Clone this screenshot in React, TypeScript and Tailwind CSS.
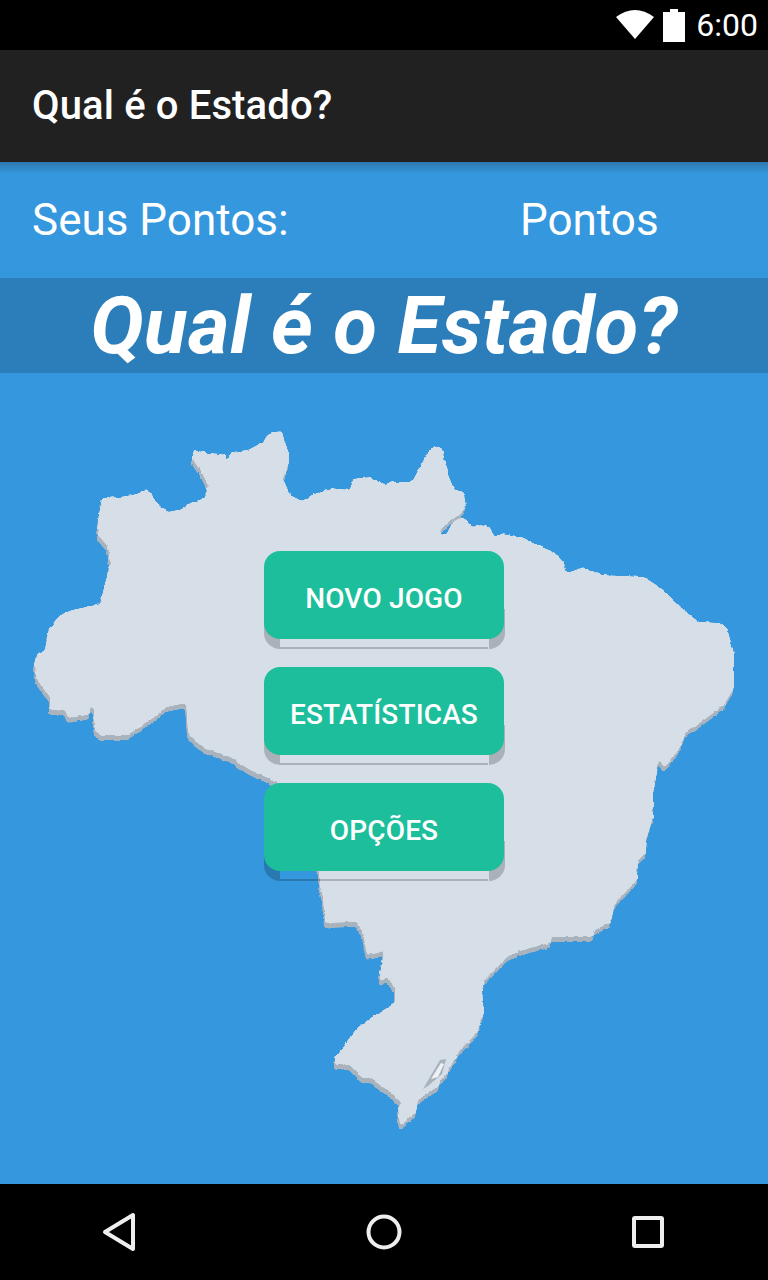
const MAP_PATH =
  "M102 498 L120 497 L137 494 L145 490 L152 493 L156 503 L168 512 L182 509 L190 503 L205 498 L208 485 L202 473 L193 460 L193 450 L208 453 L223 454 L228 460 L232 452 L248 450 L263 442 L267 433 L282 431 L285 443 L289 453 L289 463 L283 478 L290 495 L302 501 L312 495 L330 488 L350 490 L353 479 L370 477 L384 484 L394 482 L412 482 L421 465 L429 450 L436 445 L442 448 L447 472 L454 489 L464 492 L466 508 L456 517 L447 523 L439 532 L446 535 L452 523 L461 517 L467 520 L472 527 L481 525 L492 528 L494 537 L504 533 L524 538 L544 548 L554 552 L564 563 L567 573 L584 567 L601 575 L644 577 L661 588 L677 603 L686 612 L699 622 L721 623 L727 628 L734 653 L734 688 L724 705 L704 720 L687 732 L677 753 L664 768 L659 758 L657 773 L653 793 L653 817 L647 837 L646 853 L638 860 L637 880 L628 890 L615 903 L611 922 L595 930 L593 937 L552 937 L550 943 L523 950 L507 957 L497 968 L485 980 L482 990 L484 1013 L477 1033 L460 1050 L447 1073 L437 1087 L418 1100 L416 1113 L400 1126 L398 1107 L402 1103 L387 1090 L370 1078 L362 1078 L350 1065 L335 1065 L335 1057 L357 1028 L372 1017 L395 1003 L395 987 L387 977 L380 982 L380 973 L384 952 L367 955 L363 933 L357 922 L325 923 L323 897 L319 883 L319 870 L277 782 L250 770 L230 757 L203 748 L188 733 L186 703 L167 707 L140 728 L127 735 L100 735 L94 727 L94 705 L88 715 L68 718 L65 710 L50 710 L50 698 L35 677 L34 663 L38 653 L45 650 L49 628 L60 615 L72 610 L100 604 L110 563 L108 547 L98 535 L98 520 Z";

function BrazilMap() {
  return (
    <svg
      className="absolute left-0 top-[-373px] h-[1280px] w-[768px]"
      viewBox="0 0 768 1280"
      fill="none"
    >
      <defs>
        {/* rounds the corners of the outline and roughens the coast */}
        <filter id="coast" x="0" y="0" width="768" height="1280" filterUnits="userSpaceOnUse">
          <feGaussianBlur stdDeviation="1.5" />
          <feComponentTransfer result="sharp">
            <feFuncA type="linear" slope="8" intercept="-3.5" />
          </feComponentTransfer>
          <feTurbulence type="fractalNoise" baseFrequency="0.18" numOctaves="2" seed="4" result="noise" />
          <feDisplacementMap in="sharp" in2="noise" scale="3.5" xChannelSelector="R" yChannelSelector="G" />
        </filter>
      </defs>
      <path d={MAP_PATH} fill="#a9b3bd" transform="translate(-1 5)" filter="url(#coast)" />
      <path d={MAP_PATH} fill="#d6dee7" filter="url(#coast)" />
      <path d="M423 1089 L440 1060 L446 1059 L442 1074 L428 1086 Z" fill="#a9b3bd" />
      <path d="M431 1079 L441 1063 L444 1064 L438 1077 Z" fill="#eef2f5" />
    </svg>
  );
}

function MenuButton({ label }: { label: string }) {
  return (
    <button className="relative h-[88px] w-[240px]">
      <span className="absolute bottom-[-10px] left-0 h-[40px] w-4 rounded-bl-[16px] bg-black/20" />
      <span className="absolute bottom-[-10px] left-4 right-4 h-[2px] bg-black/20" />
      <span className="absolute bottom-[-10px] right-[-1px] h-[40px] w-4 rounded-br-[16px] bg-black/20" />
      <span className="absolute inset-0 flex items-center justify-center rounded-[16px] bg-[#1dbe9b] pt-[8px] text-[28px] font-medium tracking-[0.15px] text-white">
        {label}
      </span>
    </button>
  );
}

export default function App() {
  return (
    <div className="flex h-[1280px] w-[768px] flex-col overflow-hidden bg-black font-['Roboto',sans-serif] text-white">
      <div className="flex h-[50px] items-center justify-end pr-[10px]">
        <svg className="mr-[8px] h-[30px] w-[40px]" viewBox="0 0 40 30" fill="white">
          <path d="M20 29 L1 7 Q20 -7 39 7 Z" />
        </svg>
        <svg className="mr-[11px] h-[33px] w-[22px]" viewBox="0 0 22 33" fill="white">
          <path d="M7 0 H15 V3 H22 V33 H0 V3 H7 Z" />
        </svg>
        <span className="text-[32px] leading-none">6:00</span>
      </div>

      <div className="flex h-[112px] items-center bg-[#212121] pl-[32px]">
        <h1 className="text-[40px] font-medium tracking-[0.13px]">Qual é o Estado?</h1>
      </div>

      <div className="flex h-[116px] items-center bg-[#3597dd] bg-[linear-gradient(#2e78b2,#3597dd_12px)] pl-[32px] text-[44px]">
        <span className="w-[488px]">Seus Pontos:</span>
        <span>Pontos</span>
      </div>

      <div className="flex h-[95px] items-center justify-center bg-[#2b7eb9] text-[80px] font-bold italic tracking-[0.4px]">
        Qual é o Estado?
      </div>

      <main className="relative flex h-[811px] flex-col items-center gap-[28px] bg-[#3597dd] pt-[178px]">
        <BrazilMap />
        <MenuButton label="NOVO JOGO" />
        <MenuButton label="ESTATÍSTICAS" />
        <MenuButton label="OPÇÕES" />
      </main>

      <div className="flex h-[96px] items-center justify-between pl-[102px] pr-[104px]">
        <svg className="h-[40px] w-[34px]" viewBox="0 0 34 40" fill="none" stroke="#eeeeee" strokeWidth="4" strokeLinejoin="round">
          <path d="M31 3 V37 L3 20 Z" />
        </svg>
        <svg className="h-[36px] w-[36px]" viewBox="0 0 36 36" fill="none" stroke="#eeeeee" strokeWidth="4">
          <circle cx="18" cy="18" r="15.5" />
        </svg>
        <svg className="h-[32px] w-[32px]" viewBox="0 0 32 32" fill="none" stroke="#eeeeee" strokeWidth="4" strokeLinejoin="round">
          <rect x="2" y="2" width="28" height="28" rx="1" />
        </svg>
      </div>
    </div>
  );
}
